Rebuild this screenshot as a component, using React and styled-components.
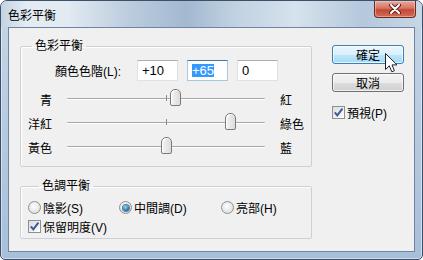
import React from "react";
import styled, { createGlobalStyle } from "styled-components";

const GlobalStyle = createGlobalStyle`
  body {
    margin: 0;
    background: #fff;
    font-family: "Liberation Sans", "Noto Sans CJK TC", sans-serif;
    font-size: 12px;
    color: #000;
  }
`;

const sliders = [
  { left: "青", right: "紅", value: 10 },
  { left: "洋紅", right: "綠色", value: 65 },
  { left: "黃色", right: "藍", value: 0 },
];

function App() {
  return (
    <>
      <GlobalStyle />
      <Window>
        <TitleBar>
          <Title>色彩平衡</Title>
          <CloseButton>
            <svg width="12" height="10" viewBox="0 0 12 10">
              <path d="M2 1 L10 9 M10 1 L2 9" stroke="#5a2018" strokeWidth="4" strokeLinecap="round" />
              <path d="M2 1 L10 9 M10 1 L2 9" stroke="#fff" strokeWidth="2" strokeLinecap="round" />
            </svg>
          </CloseButton>
        </TitleBar>
        <Client>
          <LeftColumn>
            <Group>
              <Legend>色彩平衡</Legend>
              <LevelRow>
                <LevelLabel>顏色色階(L):</LevelLabel>
                <Field>+10</Field>
                <Field $focused>
                  <Selected>+65</Selected>
                </Field>
                <Field>0</Field>
              </LevelRow>
              <Sliders>
                {sliders.map((s) => (
                  <SliderRow key={s.left}>
                    <SideLabel $align="right">{s.left}</SideLabel>
                    <Track>
                      <Tick />
                      <Thumb style={{ left: 99 + (s.value / 100) * 99 - 5.5 }} />
                    </Track>
                    <SideLabel>{s.right}</SideLabel>
                  </SliderRow>
                ))}
              </Sliders>
            </Group>
            <Group $tone>
              <Legend>色調平衡</Legend>
              <OptionRow>
                <Option>
                  <Radio />
                  <span>陰影(S)</span>
                </Option>
                <Option>
                  <Radio $checked />
                  <span>中間調(D)</span>
                </Option>
                <Option>
                  <Radio />
                  <span>亮部(H)</span>
                </Option>
              </OptionRow>
              <Option $row>
                <CheckBox />
                <span>保留明度(V)</span>
              </Option>
            </Group>
          </LeftColumn>
          <RightColumn>
            <Button $hot>確定</Button>
            <Button>取消</Button>
            <Option $preview>
              <CheckBox />
              <span>預視(P)</span>
            </Option>
            <Cursor width="13" height="20" viewBox="0 0 13 20">
              <path
                d="M0.5 0.5 L0.5 16.5 L4.3 12.8 L6.8 18.8 L9.4 17.7 L7 11.9 L12 11.9 Z"
                fill="#fff"
                stroke="#1b2230"
                strokeWidth="1"
                strokeLinejoin="round"
              />
            </Cursor>
          </RightColumn>
        </Client>
      </Window>
    </>
  );
}

function CheckBox() {
  return (
    <Box>
      <svg width="11" height="11" viewBox="0 0 11 11">
        <path d="M1.8 5.4 L4.3 8.3 L9.4 1.6" fill="none" stroke="#3b5c98" strokeWidth="2" />
      </svg>
    </Box>
  );
}

export default App;

const Window = styled.div`
  width: 423px;
  height: 260px;
  box-sizing: border-box;
  border: 1px solid #3d506a;
  border-radius: 7px 7px 5px 5px;
  background: linear-gradient(#c6d6e6, #a7bfd9);
  box-shadow: inset 0 0 0 1px rgba(255, 255, 255, 0.45);
  display: flex;
  flex-direction: column;
  overflow: hidden;
`;

const TitleBar = styled.div`
  height: 26px;
  flex: none;
  display: flex;
  align-items: center;
  background: linear-gradient(
    to right,
    #c3d3e3 0%,
    #e4ebf3 6%,
    #e2eaf2 16%,
    #bccdde 30%,
    #a3b9d0 44%,
    #c2d2e2 56%,
    #d6e2ed 70%,
    #b5c8dc 86%,
    #c8d7e6 100%
  );
`;

const Title = styled.div`
  padding-left: 7px;
  padding-top: 1px;
  font-size: 12px;
  flex: 1;
`;

const CloseButton = styled.div`
  align-self: flex-start;
  width: 42px;
  height: 17px;
  margin-right: 6px;
  box-sizing: border-box;
  border: 1px solid #6b2a22;
  border-top: none;
  border-radius: 0 0 4px 4px;
  background: linear-gradient(#e8ab9c 0%, #d77461 45%, #c24933 55%, #d26e56 100%);
  box-shadow: inset 0 0 0 1px rgba(255, 220, 210, 0.45);
  display: flex;
  align-items: center;
  justify-content: center;
`;

const Client = styled.div`
  height: 225px;
  margin: 0 7px;
  box-sizing: border-box;
  border: 1px solid #6e84a1;
  background: #f0f0f0;
  display: flex;
  padding: 10px 0 0 11px;
`;

const LeftColumn = styled.div`
  width: 292px;
  display: flex;
  flex-direction: column;
  gap: 11px;
`;

const Group = styled.fieldset`
  margin: 0;
  width: 292px;
  box-sizing: border-box;
  border: 1px solid #cdd1d6;
  border-radius: 2px;
  box-shadow: inset 1px 1px 0 #fff;
  padding: ${(p) => (p.$tone ? "5px 0 3px 7px" : "0 0 7px 0")};
  min-inline-size: 0;
`;

const Legend = styled.legend`
  margin-left: 11px;
  padding: 0 3px;
  font-size: 12px;
  line-height: 16px;
`;

const LevelRow = styled.div`
  display: flex;
  align-items: center;
  margin-top: 6px;
  padding-left: 34px;
  gap: 9px;
`;

const LevelLabel = styled.span`
  width: 66px;
  margin-right: 7px;
  white-space: nowrap;
`;

const Field = styled.div`
  width: 41px;
  height: 21px;
  box-sizing: border-box;
  border: 1px solid ${(p) => (p.$focused ? "#a4c9e3" : "#dde2e8")};
  border-top-color: ${(p) => (p.$focused ? "#3d7bad" : "#abadb3")};
  background: #fff;
  padding-left: 4px;
  font-family: "Liberation Sans", Arial, sans-serif;
  font-size: 13px;
  line-height: 19px;
`;

const Selected = styled.span`
  display: inline-block;
  background: #3399ff;
  color: #fff;
  line-height: 13px;
`;

const Sliders = styled.div`
  margin-top: 6px;
`;

const SliderRow = styled.div`
  display: grid;
  grid-template-columns: 31px 198px auto;
  column-gap: 15px;
  height: 24px;
  align-items: center;
`;

const SideLabel = styled.span`
  text-align: ${(p) => p.$align || "left"};
`;

const Track = styled.div`
  position: relative;
  height: 0;
  border-top: 1px solid #a7a7a7;
  border-bottom: 1px solid #fff;
  border-radius: 1px;
`;

const Tick = styled.div`
  position: absolute;
  left: 99px;
  top: -4px;
  width: 1px;
  height: 6px;
  background: #8c8c8c;
`;

const Thumb = styled.div`
  position: absolute;
  top: -10px;
  width: 11px;
  height: 17px;
  box-sizing: border-box;
  border: 1px solid #7a7a7a;
  border-radius: 5px 5px 2px 2px;
  background: linear-gradient(to right, #f4f4f4, #dcdcdc);
  box-shadow: inset 1px 1px 0 #fff;
`;

const OptionRow = styled.div`
  display: grid;
  grid-template-columns: 91px 102px auto;
  height: 17px;
  align-items: center;
`;

const Option = styled.label`
  display: flex;
  align-items: center;
  gap: 2px;
  height: ${(p) => (p.$preview ? "16px" : "17px")};
  margin-top: ${(p) => (p.$row ? "2px" : p.$preview ? "3px" : "0")};
`;

const Radio = styled.span`
  width: 13px;
  height: 13px;
  box-sizing: border-box;
  border-radius: 50%;
  border: 1px solid #8e8f8f;
  background: radial-gradient(circle at 45% 40%, #ffffff, #d4d4d4);
  display: flex;
  align-items: center;
  justify-content: center;
  &::after {
    content: "";
    display: ${(p) => (p.$checked ? "block" : "none")};
    width: 6px;
    height: 6px;
    border-radius: 50%;
    background: radial-gradient(circle at 40% 35%, #8fdcf5, #1f5f8c 75%);
    box-shadow: 0 0 0 1px #4a7fa6;
  }
`;

const Box = styled.span`
  width: 13px;
  height: 13px;
  box-sizing: border-box;
  border: 1px solid #8e8f8f;
  background: linear-gradient(135deg, #d9dbdd, #ffffff);
  display: flex;
  align-items: center;
  justify-content: center;
`;

const RightColumn = styled.div`
  position: relative;
  margin-left: 20px;
  width: 72px;
  display: flex;
  flex-direction: column;
  padding-top: 7px;
  gap: 9px;
`;

const Button = styled.div`
  height: 19px;
  box-sizing: border-box;
  border: 1px solid ${(p) => (p.$hot ? "#3c7fb1" : "#707070")};
  border-radius: 3px;
  background: ${(p) =>
    p.$hot
      ? "linear-gradient(#eaf6fd 0%, #d9f0fc 50%, #bee6fd 51%, #a7d9f5 100%)"
      : "linear-gradient(#f2f2f2 0%, #ebebeb 50%, #dddddd 51%, #cfcfcf 100%)"};
  box-shadow: inset 0 0 0 1px rgba(255, 255, 255, 0.7);
  display: flex;
  align-items: center;
  justify-content: center;
  font-size: 12px;
`;

const Cursor = styled.svg`
  position: absolute;
  left: 53px;
  top: 15px;
`;
